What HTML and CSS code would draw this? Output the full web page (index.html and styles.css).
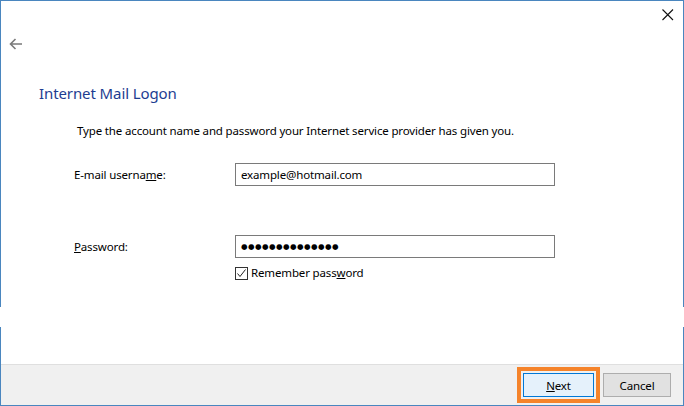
FILE: index.html
```html
<!DOCTYPE html>
<html>
<head>
<meta charset="utf-8">
<link rel="stylesheet" href="styles.css">
</head>
<body>
<div class="window">
  <div class="titlebar">
    <svg class="close" width="12" height="12" viewBox="0 0 12 12"><path d="M0.5 0.5 L11 11 M11 0.5 L0.5 11" stroke="#111" stroke-width="1.1" fill="none"/></svg>
  </div>
  <div class="backrow">
    <svg class="back" width="14" height="12" viewBox="0 0 14 12"><path d="M1.5 6 H13 M6.5 1 L1.5 6 L6.5 11" stroke="#7a7a7a" stroke-width="1.6" fill="none"/></svg>
  </div>
  <div class="content">
    <h1 class="heading">Internet Mail Logon</h1>
    <p class="desc">Type the account name and password your Internet service provider has given you.</p>
    <div class="row row-user">
      <label class="label">E-mail userna<u>m</u>e:</label>
      <div class="field">example@hotmail.com</div>
    </div>
    <div class="row row-pass">
      <label class="label"><u>P</u>assword:</label>
      <div class="field dots">●●●●●●●●●●●●●●</div>
    </div>
    <div class="check-row">
      <span class="checkbox"><svg width="11" height="11" viewBox="0 0 11 11"><path d="M1.5 5.5 L4 8.5 L9.5 1.5" stroke="#222" stroke-width="1" fill="none"/></svg></span>
      <span class="check-label">Remember pass<u>w</u>ord</span>
    </div>
  </div>
  <div class="footer">
    <div class="focus-ring"><button class="btn btn-primary"><u>N</u>ext</button></div>
    <button class="btn">Cancel</button>
  </div>
  <div class="gap gap-left"></div>
  <div class="gap gap-right"></div>
</div>
</body>
</html>
```
FILE: styles.css
```css
* { box-sizing: border-box; }
html, body { margin: 0; padding: 0; background: #fff; }
body { font-family: "Noto Sans", "Open Sans", sans-serif; font-size: 12px; color: #000; }
.window {
  position: relative;
  width: 684px;
  height: 406px;
  border: 1px solid #4a86bf;
  display: flex;
  flex-direction: column;
  background: #fff;
}
.titlebar { height: 30px; display: flex; justify-content: flex-end; align-items: flex-start; padding: 8px 9px 0 0; }
.close { display: block; }
.backrow { height: 30px; padding: 7px 0 0 8px; }
.back { display: block; }
.content { flex: 1; padding-left: 38px; }
.heading {
  margin: 22px 0 0 0;
  font-weight: normal;
  font-size: 15px;
  line-height: 20px;
  color: #1d3d91;
  letter-spacing: -0.1px;
}
.desc { margin: 20px 0 0 38px; font-size: 11.5px; line-height: 16px; letter-spacing: -0.15px; }
.row { display: flex; align-items: center; margin-left: 35px; }
.row-user { margin-top: 24px; }
.row-pass { margin-top: 49px; }
.label { width: 161px; font-size: 11.5px; letter-spacing: -0.15px; }
.field {
  width: 320px;
  height: 23px;
  border: 1px solid #7a7a7a;
  padding: 0 5px;
  line-height: 21px;
  font-size: 11.5px;
  letter-spacing: -0.15px;
}
.dots { font-family: "DejaVu Sans", sans-serif; font-size: 7.5px; letter-spacing: 0.45px; line-height: 21px; }
.check-row { display: flex; align-items: center; margin: 8px 0 0 196px; }
.checkbox {
  width: 13px; height: 13px;
  border: 1px solid #333;
  display: flex; align-items: center; justify-content: center;
  background: #fff;
}
.checkbox svg { display: block; }
.check-label { margin-left: 3px; font-size: 11.5px; letter-spacing: -0.15px; line-height: 14px; }
.footer {
  height: 41px;
  background: #f0f0f0;
  border-top: 1px solid #dfdfdf;
  display: flex;
  justify-content: flex-end;
  align-items: center;
  padding-right: 12px;
}
.focus-ring {
  border: 4px solid #f5832a;
  padding: 2px;
  margin-right: 3px;
  display: flex;
}
.btn {
  font-family: "Noto Sans", "Open Sans", sans-serif;
  font-size: 11.5px;
  letter-spacing: -0.15px;
  width: 68px;
  height: 24px;
  padding: 0;
  background: #e1e1e1;
  border: 1px solid #adadad;
  color: #000;
}
.btn-primary { width: 71px; background: #e5f1fb; border: 1px solid #0078d7; }
.gap { position: absolute; top: 306px; width: 2px; height: 20px; background: #fff; }
.gap-left { left: -1px; }
.gap-right { right: -1px; }
```
